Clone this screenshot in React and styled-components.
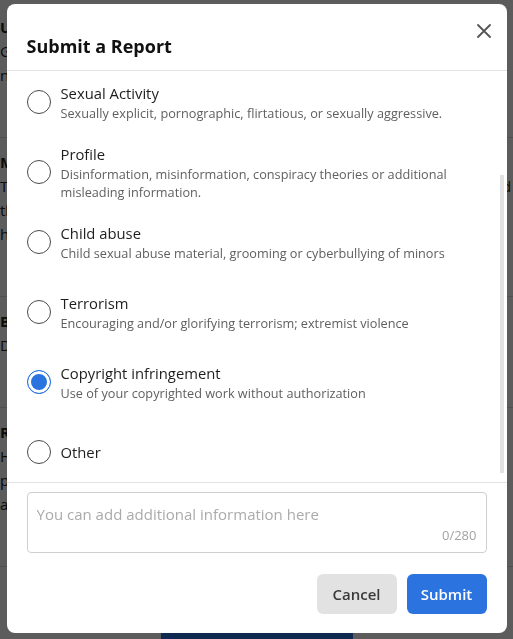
import React, { useLayoutEffect, useRef, useState } from "react";
import styled, { createGlobalStyle } from "styled-components";

const GlobalStyle = createGlobalStyle`
  html, body {
    margin: 0;
    padding: 0;
  }
  body {
    font-family: "Open Sans", "Liberation Sans", sans-serif;
    background: #fff;
    color: #222;
    overflow: hidden;
  }
  * {
    box-sizing: border-box;
  }
`;

const comments = [
  {
    name: "Upper deck regular",
    text: "Great recap, really appreciate the breakdown of the second half and the new formation they tried out."
  },
  {
    name: "Mike_the_fan",
    text: "Totally agree with this one. The substitutions made all the difference, and the crowd was the loudest it has been all season. Can't wait for the next home game."
  },
  {
    name: "Blue 1999",
    text: "Does anyone know when the tickets go on sale for the derby?"
  },
  {
    name: "Richie",
    text: "Honestly the best match I have seen this year, everybody played their part and the defence was rock solid the whole way through. Good times ahead."
  }
];

const reasons = [
  { id: "spam", title: "Spam", desc: "Misleading or repetitive posts" },
  { id: "harassment", title: "Harassment", desc: "Bullying, threats or hateful comments" },
  {
    id: "sexual",
    title: "Sexual Activity",
    desc: "Sexually explicit, pornographic, flirtatious, or sexually aggressive."
  },
  {
    id: "profile",
    title: "Profile",
    desc: "Disinformation, misinformation, conspiracy theories or additional misleading information."
  },
  {
    id: "child",
    title: "Child abuse",
    desc: "Child sexual abuse material, grooming or cyberbullying of minors"
  },
  {
    id: "terrorism",
    title: "Terrorism",
    desc: "Encouraging and/or glorifying terrorism; extremist violence"
  },
  {
    id: "copyright",
    title: "Copyright infringement",
    desc: "Use of your copyrighted work without authorization"
  },
  { id: "other", title: "Other" }
];

const MAX = 280;

export default function App() {
  const [selected, setSelected] = useState("copyright");
  const [note, setNote] = useState("");
  const [thumb, setThumb] = useState({ top: 0, height: 0 });
  const listRef = useRef(null);

  // native scrollbar is hidden, so the thumb is drawn from the scroll metrics
  const measure = () => {
    const el = listRef.current;
    if (!el) return;
    const ratio = el.clientHeight / el.scrollHeight;
    setThumb({ top: el.scrollTop * ratio, height: el.clientHeight * ratio });
  };

  useLayoutEffect(() => {
    if (listRef.current) listRef.current.scrollTop = 144;
    measure();
  }, []);

  return (
    <>
      <GlobalStyle />
      <Page>
        {comments.map((c) => (
          <Comment key={c.name}>
            <strong>{c.name}</strong>
            <p>{c.text}</p>
          </Comment>
        ))}
        <MoreButton>Show more comments</MoreButton>
      </Page>

      <Backdrop>
        <Modal role="dialog" aria-labelledby="report-title">
          <Header>
            <Title id="report-title">Submit a Report</Title>
            <CloseButton aria-label="Close">
              <svg width="14" height="14" viewBox="0 0 14 14">
                <path
                  d="M1 1L13 13M13 1L1 13"
                  stroke="#555"
                  strokeWidth="1.8"
                  strokeLinecap="round"
                />
              </svg>
            </CloseButton>
          </Header>

          <ListWrap>
            <List ref={listRef} onScroll={measure}>
              {reasons.map((r) => (
                <Option key={r.id} onClick={() => setSelected(r.id)}>
                  <Radio $checked={selected === r.id} />
                  <OptionText>
                    <OptionTitle>{r.title}</OptionTitle>
                    {r.desc && <OptionDesc>{r.desc}</OptionDesc>}
                  </OptionText>
                </Option>
              ))}
            </List>
            <Thumb style={{ top: thumb.top, height: thumb.height }} />
          </ListWrap>

          <Footer>
            <Field>
              <NoteInput
                placeholder="You can add additional information here"
                value={note}
                maxLength={MAX}
                onChange={(e) => setNote(e.target.value)}
              />
              <Counter>
                {note.length}/{MAX}
              </Counter>
            </Field>
            <Actions>
              <Button $variant="secondary">Cancel</Button>
              <Button $variant="primary">Submit</Button>
            </Actions>
          </Footer>
        </Modal>
      </Backdrop>
    </>
  );
}

const Page = styled.div`
  width: 513px;
  padding-top: 3px;
  font-size: 15px;
  line-height: 24px;
  color: #222;
`;

const Comment = styled.div`
  padding: 12px 0 50px;
  border-bottom: 1px solid #ddd;

  strong {
    display: block;
    font-weight: 700;
  }
  p {
    margin: 0;
  }
`;

const MoreButton = styled.button`
  display: block;
  margin: 60px auto 0;
  width: 192px;
  height: 40px;
  border: 0;
  border-radius: 6px;
  background: #2b74e0;
  color: #fff;
  font: 600 15px/40px "Open Sans", sans-serif;
`;

const Backdrop = styled.div`
  position: fixed;
  inset: 0;
  display: flex;
  align-items: center;
  justify-content: center;
  background: rgba(0, 0, 0, 0.64);
`;

const Modal = styled.div`
  width: 500px;
  height: 629px;
  display: flex;
  flex-direction: column;
  background: #fff;
  border-radius: 8px;
  overflow: hidden;
  margin-top: -2px;
`;

const Header = styled.div`
  display: flex;
  justify-content: space-between;
  align-items: flex-start;
  padding: 20px 16px 12px 20px;
  border-bottom: 1px solid #e2e2e2;
  flex-shrink: 0;
`;

const Title = styled.h2`
  margin: 10px 0 0;
  font-size: 18px;
  line-height: 24px;
  font-weight: 700;
  color: #111;
`;

const CloseButton = styled.button`
  display: flex;
  width: 14px;
  height: 14px;
  padding: 0;
  border: 0;
  background: none;
  cursor: pointer;
`;

const ListWrap = styled.div`
  position: relative;
  flex: 1;
  min-height: 0;
`;

const List = styled.div`
  height: 100%;
  overflow-y: auto;
  padding-bottom: 8px;
  scrollbar-width: none;

  &::-webkit-scrollbar {
    display: none;
  }
`;

const Thumb = styled.div`
  position: absolute;
  right: 3px;
  width: 4px;
  background: #e2e2e2;
  pointer-events: none;
`;

const Option = styled.label`
  display: flex;
  align-items: center;
  gap: 10px;
  min-height: 70px;
  padding: 0 24px 0 20px;
  cursor: pointer;
`;

const Radio = styled.span`
  flex-shrink: 0;
  width: 24px;
  height: 24px;
  border-radius: 50%;
  border: 1.5px solid ${(p) => (p.$checked ? "#2b74e0" : "#4a4a4a")};
  background: ${(p) => (p.$checked ? "#2b74e0" : "#fff")};
  box-shadow: ${(p) => (p.$checked ? "inset 0 0 0 3px #fff" : "none")};
`;

const OptionText = styled.div`
  display: flex;
  flex-direction: column;
`;

const OptionTitle = styled.span`
  font-size: 14.8px;
  line-height: 22px;
  color: #1e1e1e;
`;

const OptionDesc = styled.span`
  font-size: 12.7px;
  line-height: 18px;
  color: #5f5f5f;
`;

const Footer = styled.div`
  flex-shrink: 0;
  border-top: 1px solid #e2e2e2;
  padding: 9px 20px 19px;
`;

const Field = styled.div`
  display: flex;
  flex-direction: column;
  border: 1px solid #cfcfcf;
  border-radius: 4px;
  padding: 10px 9px 8px;
`;

const NoteInput = styled.textarea`
  height: 23px;
  padding: 0;
  border: 0;
  outline: none;
  resize: none;
  font: 15px/22px "Open Sans", "Liberation Sans", sans-serif;
  color: #222;

  &::placeholder {
    color: #ababab;
  }
`;

const Counter = styled.span`
  align-self: flex-end;
  font-size: 13px;
  line-height: 18px;
  color: #a3a3a3;
`;

const Actions = styled.div`
  display: flex;
  justify-content: flex-end;
  gap: 10px;
  margin-top: 21px;
`;

const Button = styled.button`
  min-width: 80px;
  height: 40px;
  padding: 0 14px;
  border: 0;
  border-radius: 6px;
  font: 600 15px/40px "Open Sans", "Liberation Sans", sans-serif;
  cursor: pointer;
  background: ${(p) => (p.$variant === "primary" ? "#2b74e0" : "#e2e2e2")};
  color: ${(p) => (p.$variant === "primary" ? "#fff" : "#3a3a3a")};
`;
